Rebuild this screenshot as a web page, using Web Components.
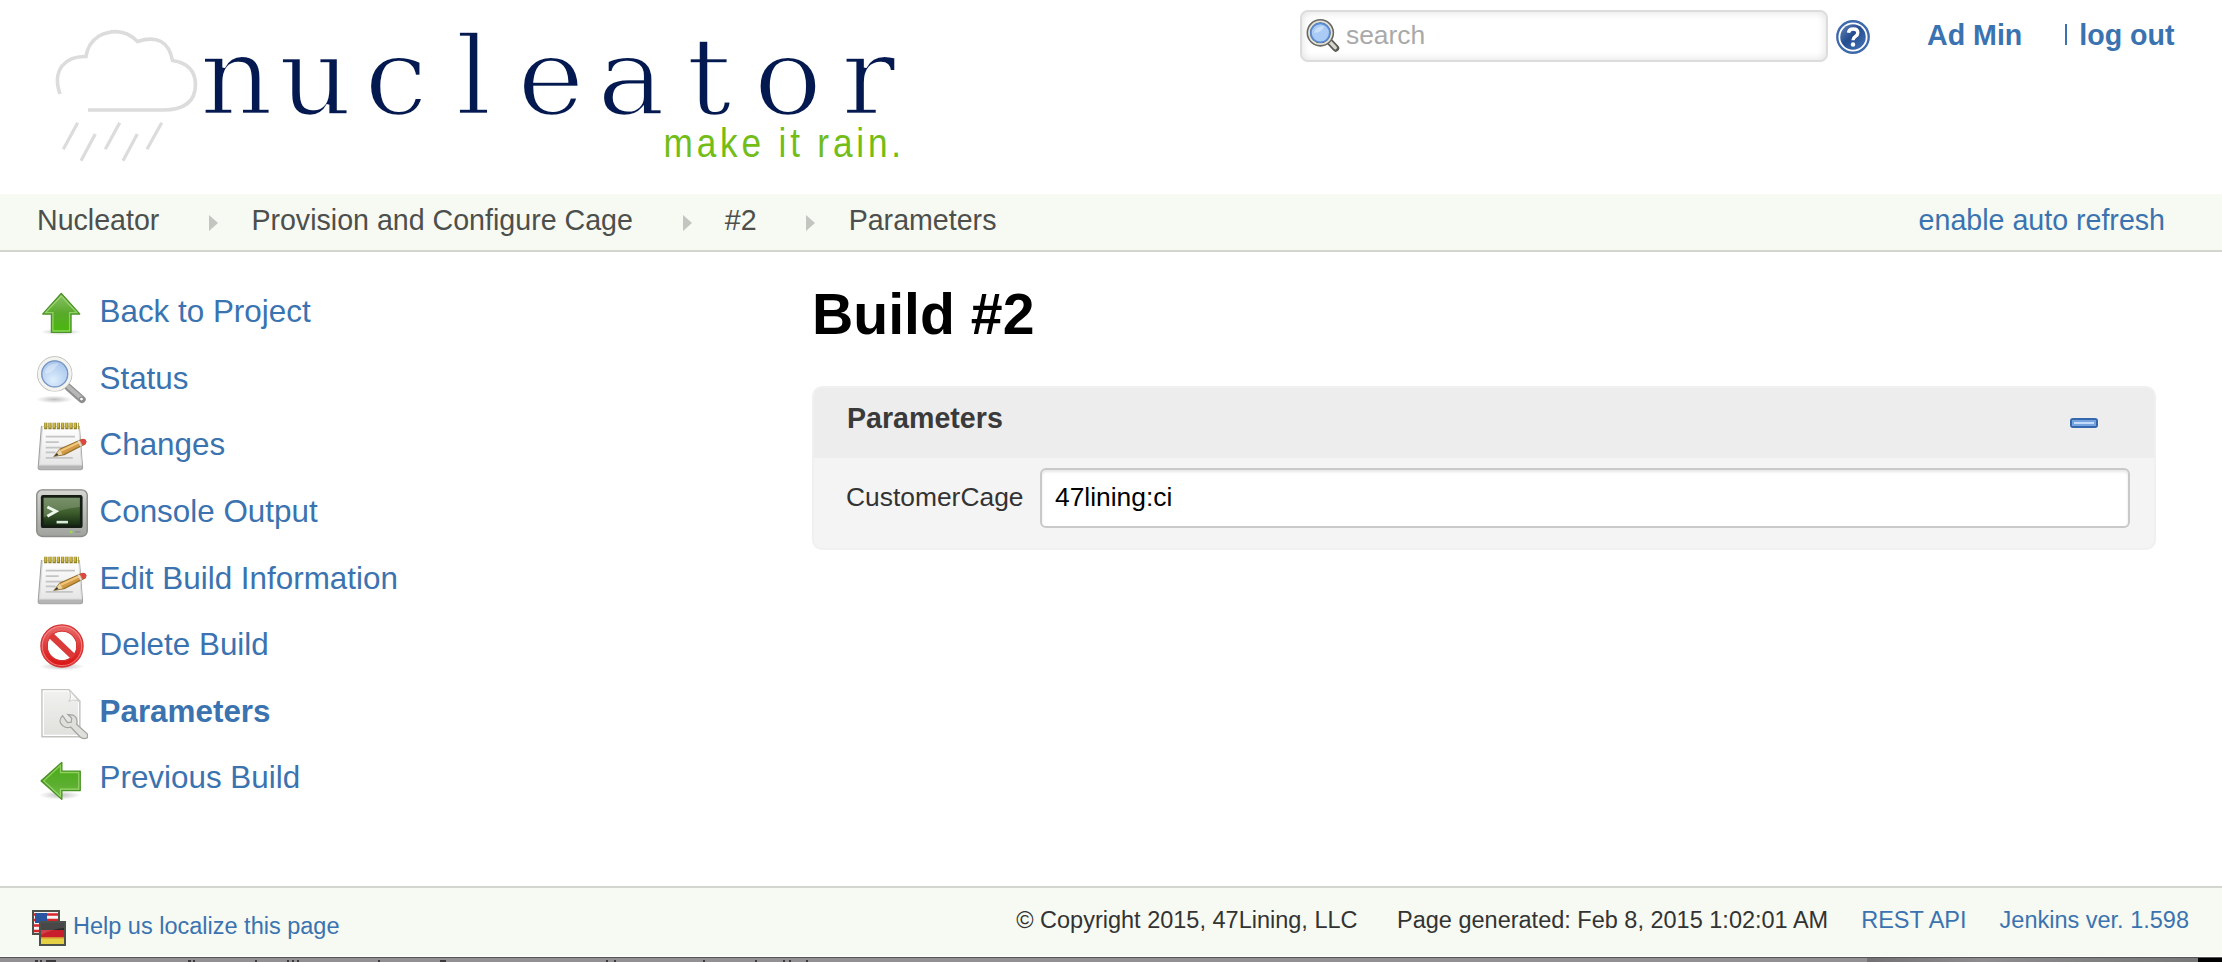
<!DOCTYPE html>
<html lang="en">
<head>
<meta charset="utf-8">
<title>Nucleator - Build #2 Parameters</title>
<style>
html,body{margin:0;background:#fff}
body{font-family:"Liberation Sans",Arial,sans-serif;color:#333;width:2222px;height:962px;overflow:hidden}
</style>
</head>
<body>
<nu-page></nu-page>
<script>
const define = (name, html) => customElements.define(name, class extends HTMLElement {
  constructor() {
    super();
    this.attachShadow({ mode: 'open' }).innerHTML = typeof html === 'function' ? html(this) : html;
  }
});

const svg = (body, box = 48) => `<svg viewBox="0 0 ${box} ${box}" width="100%" height="100%">${body}</svg>`;
const arrow = `<path d="M24 5.500 41 24.500H33V41.500H15V24.500H7Z" fill="url(#g)" stroke="#4a9226" stroke-width="1.300" stroke-linejoin="round"/><path d="M24 7.800 38.500 23.300H31.700V40.200H16.300V23.300H9.500Z" fill="none" stroke="#b2e585" stroke-opacity=".65" stroke-width="1.200"/>`;
const greenGrad = `<linearGradient id="g" x1="0" y1="0" x2="0" y2="1"><stop offset="0" stop-color="#8cc36b"/><stop offset=".5" stop-color="#5aa92c"/><stop offset="1" stop-color="#48b90b"/></linearGradient>`;
const shadowGrad = `<radialGradient id="s"><stop offset="0" stop-color="#000" stop-opacity=".25"/><stop offset="1" stop-color="#000" stop-opacity="0"/></radialGradient>`;
const ICONS = {
  up: svg(`<defs>${greenGrad}${shadowGrad}</defs><ellipse cx="23" cy="40.500" rx="19" ry="3" fill="url(#s)"/><g transform="translate(-.700 -.500)">${arrow}</g>`),
  left: svg(`<defs><linearGradient id="g" x1="1" y1="0" x2="0" y2="0"><stop offset="0" stop-color="#46ad12"/><stop offset=".6" stop-color="#5cae30"/><stop offset="1" stop-color="#72c048"/></linearGradient>${shadowGrad}</defs><ellipse cx="22" cy="38" rx="19" ry="4" fill="url(#s)"/><g transform="translate(-.700 .800) rotate(-90 24 24)">${arrow}</g>`),
  search: svg(`<defs>${shadowGrad}<radialGradient id="l" cx=".45" cy=".7" r=".8"><stop offset="0" stop-color="#deeefd"/><stop offset=".6" stop-color="#b4cff0"/><stop offset="1" stop-color="#95b6e3"/></radialGradient></defs><ellipse cx="17" cy="41" rx="17" ry="3.500" fill="url(#s)"/><path d="M30 30 42.500 41" stroke="#8f8f8f" stroke-width="6.800" stroke-linecap="round"/><path d="M30 29.500 42 40" stroke="#b7b7b7" stroke-width="3.800" stroke-linecap="round"/><circle cx="42" cy="40.700" r="1.800" fill="#fff" stroke="#888"/><circle cx="17.300" cy="17.500" r="14" fill="url(#l)" stroke="#b7b7b4" stroke-width="4.600"/><circle cx="17.300" cy="17.500" r="14" fill="none" stroke="#f3f3ef" stroke-width="3.300"/><circle cx="17.300" cy="17.500" r="12" fill="none" stroke="#7596cb" stroke-width="1.200"/><path d="M8 17c1-7 7-10 13-9-4 4-5 9-13 9Z" fill="#fff" opacity=".3"/>`),
  note: svg(`<defs><linearGradient id="p" x1="0" y1="0" x2="0" y2="1"><stop offset="0" stop-color="#fff"/><stop offset="1" stop-color="#e6e6e6"/></linearGradient></defs><path d="M5 5H40L43 43Q43 45 41 45H4Q2 45 2 43Z" fill="#b5b5b5" stroke="#a2a2a2"/><path d="M6 5H39.500L42 40.500H3.300Z" fill="url(#p)" stroke="#ddd"/><path d="M7.500 4.500H39.500" stroke="#8e7f25" stroke-width="6" stroke-dasharray="3 .9"/><path d="M8 4H39.500" stroke="#cfb940" stroke-width="4.500" stroke-dasharray="1.700 2.200"/><path d="M9 14.500H36M9 19.500H21M9 24.500H29M9 29H18M9 34H34" stroke="#c4c4c4" stroke-width="1.600"/><path d="M17 32.500 22 26 41 17.500Q45 16 46 19L45.500 21 26 31Z" fill="#d19a45" stroke="#93702f" stroke-width="1.100"/><path d="M23 27.500 41 19.200" stroke="#f2c478" stroke-width="2"/><path d="M40.500 17.800 43 16.700Q46.300 16 46.500 19L46 21 43.500 22.500Z" fill="#df4545"/><path d="M39 18.200 41.800 23.300" stroke="#ddd" stroke-width="1.500"/><path d="m17 32.500 5-6.500 2.500 5Z" fill="#ecd5a4"/><path d="m17 32.500 2.300-3 1.500 2Z" fill="#333"/>`),
  console: svg(`<defs><linearGradient id="b" x1="0" y1="0" x2="0" y2="1"><stop offset="0" stop-color="#d5d6d2"/><stop offset="1" stop-color="#a0a29d"/></linearGradient><linearGradient id="c" x1="0" y1="0" x2="0" y2="1"><stop offset="0" stop-color="#607c53"/><stop offset=".5" stop-color="#41602f"/><stop offset="1" stop-color="#142b12"/></linearGradient></defs><rect x=".7" y="1.700" width="46.600" height="43" rx="5" fill="url(#b)" stroke="#898b86" stroke-width="1.300"/><rect x="4.500" y="6.500" width="38.500" height="30.500" rx="2" fill="#151d14"/><rect x="7" y="9" width="33.500" height="25.500" fill="url(#c)"/><path d="M7 9H40.500V17.500Q20 19.500 7 27.500Z" fill="#b9c9ac" opacity=".28"/><path d="m10.500 17.500 8 4-8 4.500" fill="none" stroke="#edf7ed" stroke-width="2.700"/><path d="M19 31.500H29.500" stroke="#dcecdc" stroke-width="2.400"/><circle cx="32.500" cy="40.500" r="1.300" fill="#9ade4b"/><path d="M36 40.500H41" stroke="#888"/>`),
  stop: svg(`<defs>${shadowGrad}<linearGradient id="r" x1="0" y1="0" x2="0" y2="1"><stop offset="0" stop-color="#eb6d6d"/><stop offset=".5" stop-color="#df3b3b"/><stop offset="1" stop-color="#d91111"/></linearGradient></defs><ellipse cx="24" cy="42" rx="21" ry="3.500" fill="url(#s)"/><path fill-rule="evenodd" d="M24 3.500a19.500 19.500 0 1 0 0 39a19.500 19.500 0 1 0 0-39ZM24 9.500a13.500 13.500 0 1 1 0 27a13.500 13.500 0 1 1 0-27Z" fill="url(#r)" stroke="#d23535" stroke-width="1.100"/><circle cx="24" cy="23" r="13" fill="#fff" opacity=".92"/><path d="m13.500 13 21 20" stroke="#dc3939" stroke-width="6"/><circle cx="24" cy="23" r="18.200" fill="none" stroke="#ff9999" stroke-opacity=".65"/>`),
  doc: svg(`<defs><linearGradient id="d" x1="0" y1="0" x2="0" y2="1"><stop offset="0" stop-color="#f1f1ef"/><stop offset="1" stop-color="#e0e0dd"/></linearGradient></defs><path d="M5.500 1.500H30.500L40.500 12V45H5.500Z" fill="url(#d)" stroke="#c3c3c0" stroke-width="1.300"/><path d="M6.800 2.800H29.500L39.200 13V43.700H6.800Z" fill="none" stroke="#fff"/><path d="M30.500 1.500Q33.500 9 30 12.500Q35.500 9.500 40.500 13Z" fill="#fbfbfb" stroke="#cfcfcc"/><path d="M24.500 25.500Q19.500 31 25 35Q28 37.500 32 36L40.500 45Q43.500 48 47.500 46V42.500L37.500 33.500Q39 27.500 34 25L29.500 24.500 33 28 32.500 31.500 29 32Z" fill="#dfdfdc" stroke="#a3a3a0" stroke-width="1.100"/>`),
  find: svg(`<path d="m21 20 7 7.500" stroke="#5c5b55" stroke-width="6.500" stroke-linecap="round"/><path d="m22 21 5.500 6" stroke="#d8d6cc" stroke-width="3.200" stroke-linecap="round"/><circle cx="13.500" cy="13" r="11" fill="#a9cbf5" stroke="#686761" stroke-width="4"/><circle cx="13.500" cy="13" r="10.700" fill="none" stroke="#e2e2dc" stroke-width="1.700"/><circle cx="13.500" cy="13" r="8.900" fill="none" stroke="#568bd6" stroke-width="1.600"/><path d="M7.500 13Q10 6 17 7Q15 13 7.500 13Z" fill="#fff" opacity=".38"/>`, 32),
  help: svg(`<defs><linearGradient id="h" x1="0" y1="0" x2="1" y2="1"><stop offset="0" stop-color="#6787be"/><stop offset=".45" stop-color="#244c8f"/><stop offset="1" stop-color="#4677b8"/></linearGradient></defs><circle cx="16" cy="16" r="14.800" fill="#fff" stroke="#3d69ab" stroke-width="2.200"/><circle cx="16" cy="16" r="12" fill="url(#h)"/><path d="M11.700 12Q12.300 8.500 16.300 8.500Q20.500 8.500 20.500 12Q20.500 14 18.300 15.500Q16 17 16 19" fill="none" stroke="#fff" stroke-width="3.200"/><circle cx="16" cy="23" r="2.100" fill="#fff"/>`, 32),
  flags: svg(`<path d="M1 1H27V24H1Z" fill="#f4f4f4" stroke="#4d514c" stroke-width="2"/><path d="M2 4.500H26M2 10H26M2 15.500H26M2 21H26" stroke="#d8252b" stroke-width="2.600"/><path d="M3 3H15V13H3Z" fill="#2856a0"/><path d="M8 12H33V35H8Z" fill="#e4d044" stroke="#4d514c" stroke-width="2"/><path d="M9 13H32V20H9Z" fill="#292929"/><path d="M9 20H32V27H9Z" fill="#c71f2b"/><path d="M9 27H32V28.500H9Z" fill="#d58b2e"/><path d="M9 13H32V18Q20 19 9 25Z" fill="#fff" opacity=".15"/>`, 36)
};

customElements.define('nu-icon', class extends HTMLElement {
  constructor() {
    super();
    this.attachShadow({ mode: 'open' });
  }
  connectedCallback() {
    this.shadowRoot.innerHTML = `<style>:host{display:block;flex:none}svg{display:block}</style>${ICONS[this.getAttribute('name')]}`;
  }
});

define('nu-link', `<style>:host{display:block;color:#3a73b0;white-space:nowrap}</style><slot></slot>`);

define('nu-logo', `<style>:host{display:block;width:920px;height:194px}svg{display:block}</style>
<svg width="920" height="194" viewBox="0 0 920 194">
<g fill="none" stroke="#dcdcdc" stroke-width="3.600">
<path d="M60 94Q54 77 62 66Q70 56 86 56.500Q88 43 99 36Q121 25 137.500 41.500Q167 32 172.500 60.500Q195.500 64 195.500 85Q195 110 163 110H88"/>
<path stroke-width="3.200" d="m77.700 122.700-14.400 26.600M95.300 134 81 160.700M119.700 122.700l-14.400 26.600M137.300 134 123 160.700M161.700 122.700 147 149.300"/>
</g>
<text transform="scale(1.060 1)" font-family="DejaVu Serif" font-size="108" y="114" text-anchor="middle" x="223.100 297.600 373.600 446.800 519.600 595.300 668.900 743.400 819.300" fill="#03194f" stroke="#fff" stroke-width="2.600">nucleator</text>
<text transform="scale(.880 1)" font-family="Liberation Sans" font-size="40" y="157" x="754" textLength="270" fill="#73bd18">make it rain.</text>
</svg>`);

define('nu-search', `<style>
:host{display:flex;align-items:center;box-sizing:border-box;width:528px;height:52px;border:2px solid #dcdcdc;border-radius:8px;padding-left:4px;box-shadow:inset 0 0 8px #ddd;color:#a9a9a9;font-size:26.400px}
nu-icon{width:34px;height:34px;margin-right:6px}
span{padding-bottom:2px}
</style><nu-icon name="find"></nu-icon><span><slot></slot></span>`);

define('nu-header', `<style>
:host{display:flex;height:194px;align-items:flex-start}
nu-search{margin:10px 8px 0 380px}
.help{width:34px;height:34px;margin-top:20px}
.user{display:flex;align-items:baseline;font-size:28.600px;font-weight:bold;line-height:50px;margin:10px 0 0 57px}
.bar{width:2px;height:21px;background:#3a73b0;margin:0 12px 0 43px}
</style><nu-logo></nu-logo><nu-search>search</nu-search><nu-icon class="help" name="help"></nu-icon>
<div class="user"><nu-link>Ad Min</nu-link><i class="bar"></i><nu-link>log out</nu-link></div>`);

define('nu-crumb', `<style>
:host{display:flex;align-items:center;color:#4d4f4c;white-space:nowrap}
svg{display:block;margin:6px 33.300px 0 49.700px}
:host([first]) svg{display:none}
</style><svg width="9" height="16"><path d="M0 0 9 8 0 16Z" fill="#c3c5c1"/></svg><slot></slot>`);

define('nu-crumbs', `<style>
:host{display:flex;align-items:center;height:56px;box-sizing:border-box;background:#f6faf2;font-size:28.600px;padding:0 57px 4px 37px;box-shadow:0 2px #d3d5cf;margin-bottom:2px}
nu-link{margin-left:auto}
</style><nu-crumb first>Nucleator</nu-crumb><nu-crumb>Provision and Configure Cage</nu-crumb><nu-crumb>#2</nu-crumb><nu-crumb>Parameters</nu-crumb><nu-link>enable auto refresh</nu-link>`);

define('nu-task', e => `<style>
:host{display:flex;align-items:center;height:66.600px;font-size:31.400px}
:host([current]){font-weight:bold}
nu-icon{width:52px;height:52px;margin-right:11.500px}
nu-link{padding-bottom:4px}
</style><nu-icon name="${e.getAttribute('icon')}"></nu-icon><nu-link><slot></slot></nu-link>`);

define('nu-panel', `<style>
:host{display:block;border:2px solid #f0f0f0;border-radius:10px;background:#f4f4f4;height:160px;overflow:hidden}
header{display:flex;align-items:center;justify-content:space-between;height:70px;background:#ededed;padding:0 56px 0 33px}
b{font-size:28.600px;padding-bottom:10px;color:#3a3a3a}
i{box-sizing:border-box;width:28px;height:10px;border:2px solid #3567ae;border-radius:3px;background:#c3dafa;box-shadow:inset 0 0 0 2px #78a4de}
</style><header><b><slot name="title"></slot></b><i></i></header><slot></slot>`);

define('nu-field', e => `<style>
:host{display:flex;align-items:center;padding:10px 24px 0 32px;font-size:26.400px}
label{width:194px;padding-bottom:2px}
div{flex:1;box-sizing:border-box;height:60px;line-height:54px;border:2px solid #c9c9c9;border-radius:6px;background:#fff;box-shadow:inset 0 2px 3px #e6e6e6;color:#000;padding-left:13px}
</style><label>${e.getAttribute('label')}</label><div><slot></slot></div>`);

define('nu-footer', `<style>
:host{display:block;height:76px;background:#fff}
.bar{display:flex;align-items:flex-start;height:68px;border-top:2px solid #d3d5cf;background:#f6faf2;font-size:23.500px;line-height:28px;padding:0 33px 0 32px;white-space:nowrap}
nu-icon{width:36px;height:36px;margin:22px 5px 0 0}
.help{margin-top:24px}
.right{display:flex;margin:18px 0 0 auto}
.gap{margin-left:39.500px}
.api{margin:0 33px}
.below{display:flex;height:4px;background:#929092;border-top:1px solid #555;margin-top:1px}
.below svg{display:block;flex:none}
.shade{width:331px;margin-left:967px;background:linear-gradient(90deg,#737173,#8e8c8e 35%,#777)}
.end{flex:1;background:#000}
</style><div class="bar"><nu-icon name="flags"></nu-icon><nu-link class="help">Help us localize this page</nu-link>
<div class="right"><span>© Copyright 2015, 47Lining, LLC</span><span class="gap">Page generated: Feb 8, 2015 1:02:01 AM</span><nu-link class="api">REST API</nu-link><nu-link>Jenkins ver. 1.598</nu-link></div></div>
<div class="below"><svg width="900" height="4"><path d="M35 3H38M40 3H42M46 3H56M188 3H191M193 3H195M255 3H257M287 3H289M292 3H294M297 3H299M378 3H380M440 3H446M606 3H608M614 3H616M703 3H705M755 3H757M783 3H785M789 3H791M806 3H808" stroke="#3c3a3c" stroke-width="2"/></svg><i class="shade"></i><i class="end"></i></div>`);

define('nu-page', `<style>
:host{display:block;width:2222px;height:962px}
main{display:grid;grid-template-columns:812px 1344px;height:634px}
nav{padding:29px 0 0 36px}
h1{margin:30px 0 40px 0;font-size:57.200px;line-height:64px;color:#000}
</style>
<nu-header></nu-header><nu-crumbs></nu-crumbs>
<main><nav>
<nu-task icon="up">Back to Project</nu-task><nu-task icon="search">Status</nu-task><nu-task icon="note">Changes</nu-task><nu-task icon="console">Console Output</nu-task><nu-task icon="note">Edit Build Information</nu-task><nu-task icon="stop">Delete Build</nu-task><nu-task icon="doc" current>Parameters</nu-task><nu-task icon="left">Previous Build</nu-task>
</nav><section><h1>Build #2</h1><nu-panel><span slot="title">Parameters</span><nu-field label="CustomerCage">47lining:ci</nu-field></nu-panel></section></main>
<nu-footer></nu-footer>`);
</script>
</body>
</html>
